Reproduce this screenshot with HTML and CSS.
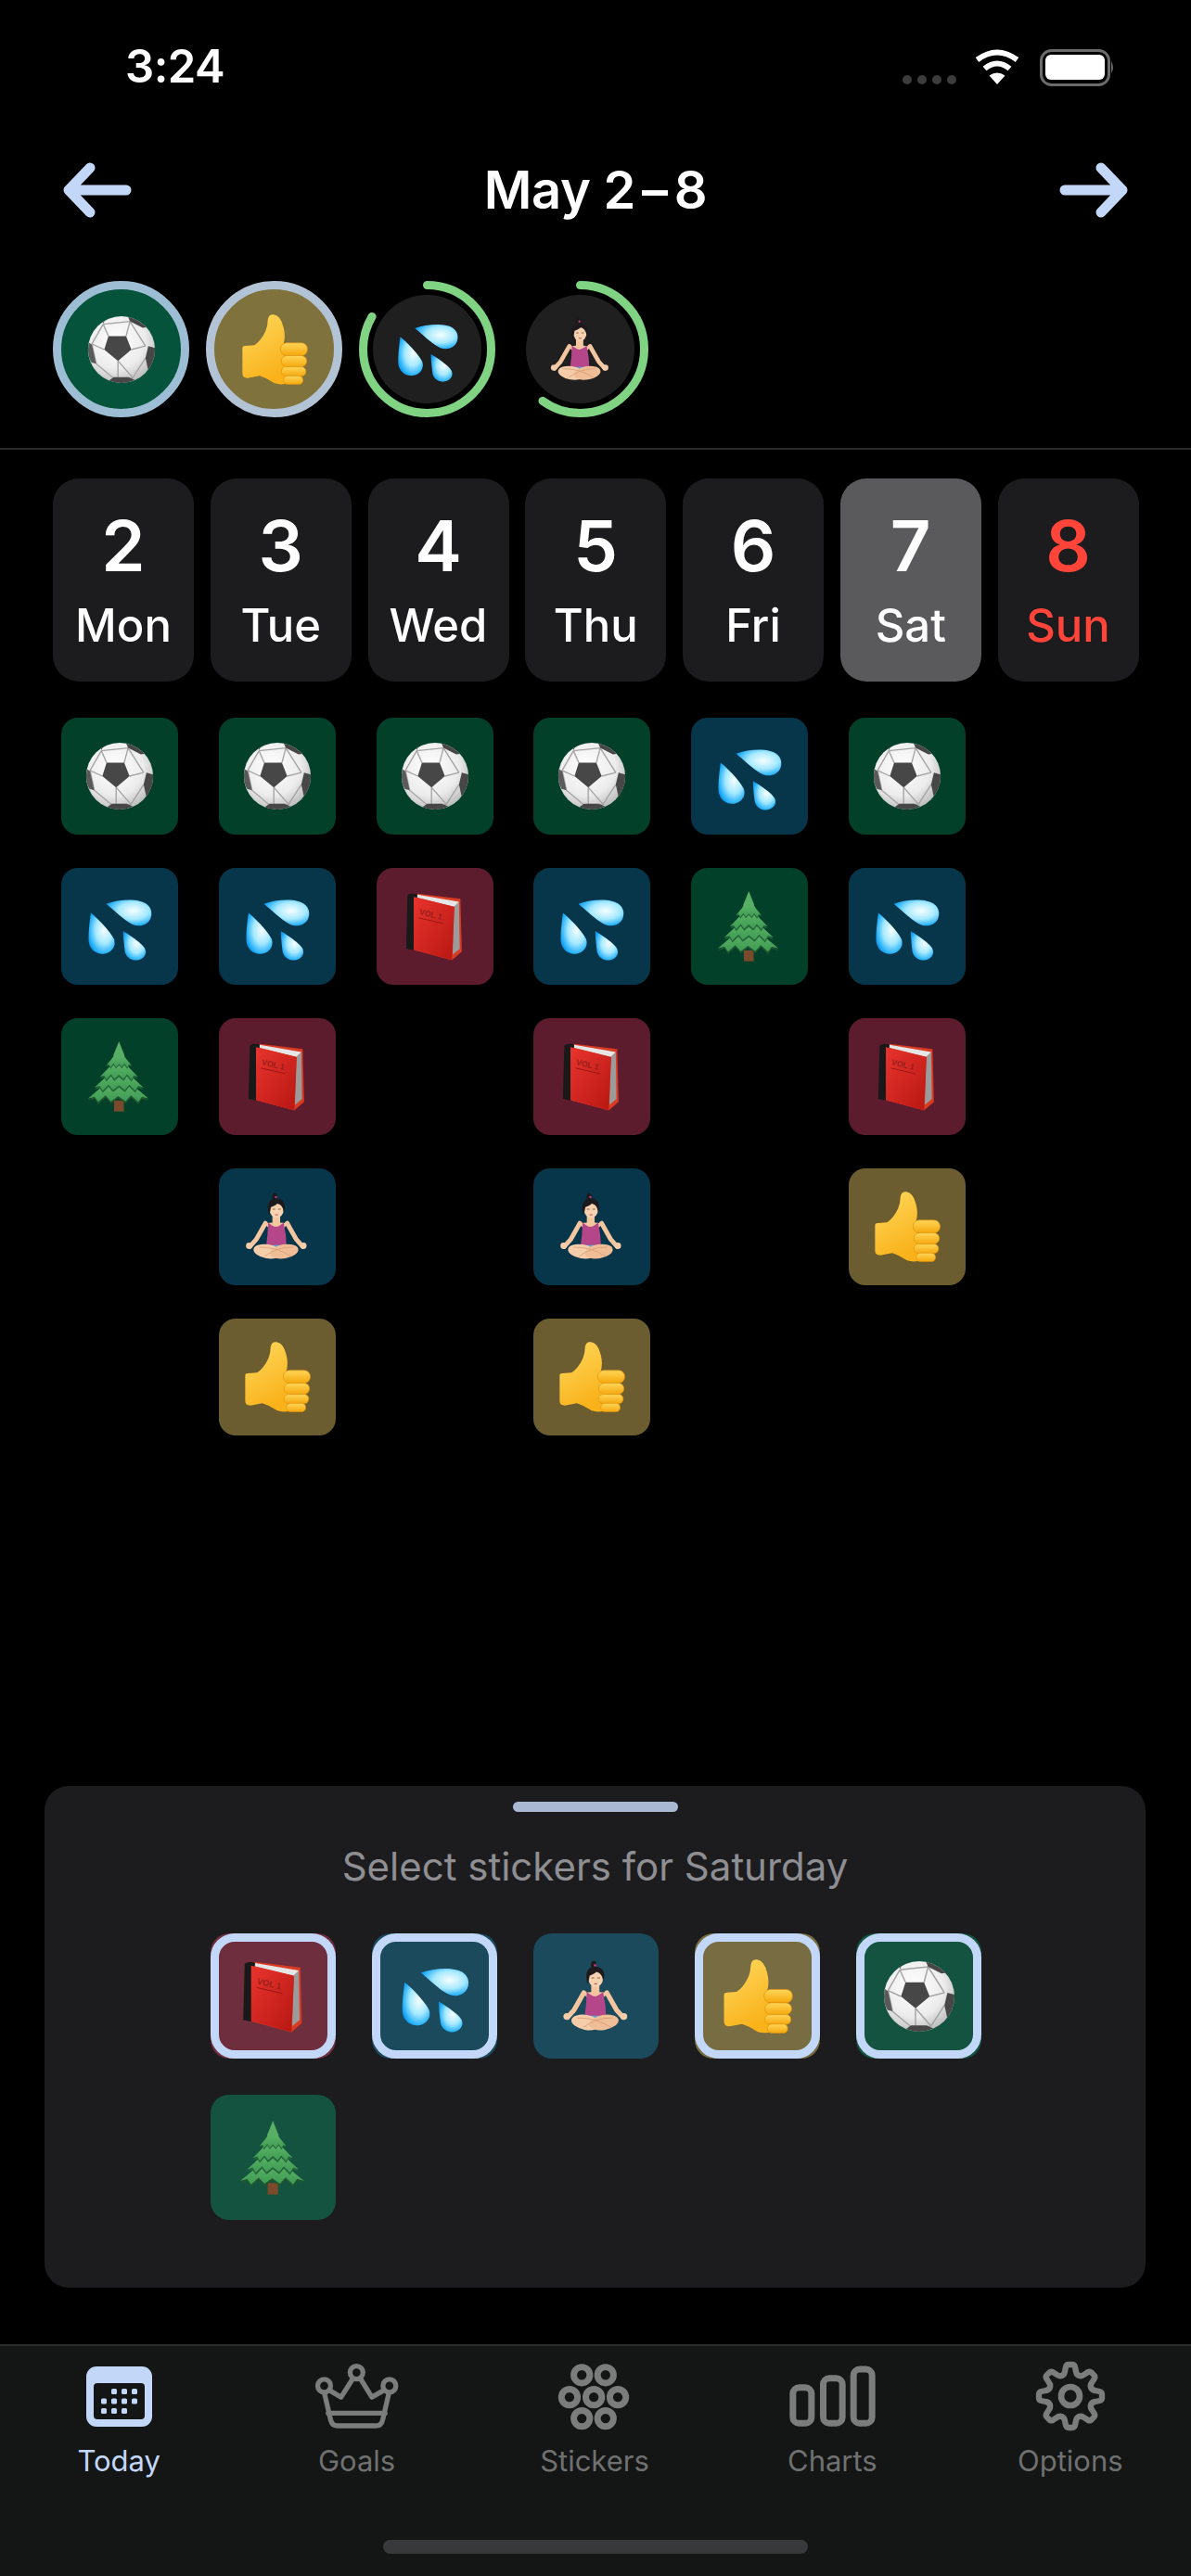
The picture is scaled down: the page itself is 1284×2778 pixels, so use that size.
FILE: index.html
```html
<!DOCTYPE html>
<html lang="en">
<head>
<meta charset="utf-8">
<title>May 2–8</title>
<link rel="stylesheet" href="styles.css">
</head>
<body>
<svg class="defs" aria-hidden="true">
  <defs>
    <radialGradient id="ballG" cx=".42" cy=".36" r=".72"><stop offset="0" stop-color="#fff"/><stop offset=".6" stop-color="#ececec"/><stop offset="1" stop-color="#b0b0b0"/></radialGradient>
    <radialGradient id="dropG" cx=".6" cy=".42" r=".66"><stop offset="0" stop-color="#f6feff"/><stop offset=".5" stop-color="#a6e9ff"/><stop offset=".85" stop-color="#2cb4fa"/><stop offset="1" stop-color="#0a95ec"/></radialGradient>
    <linearGradient id="coverG" x1="0" y1="0" x2="1" y2="1"><stop offset="0" stop-color="#e8342e"/><stop offset="1" stop-color="#b81712"/></linearGradient>
    <linearGradient id="thumbG" x1="0" y1="0" x2=".4" y2="1"><stop offset="0" stop-color="#ffd95f"/><stop offset="1" stop-color="#f9b21a"/></linearGradient>
    <linearGradient id="fingerG" x1="0" y1="0" x2="0" y2="1"><stop offset="0" stop-color="#ffd658"/><stop offset="1" stop-color="#f5a80d"/></linearGradient>
    <linearGradient id="treeG" x1="0" y1="0" x2="0" y2="1"><stop offset="0" stop-color="#6cc46f"/><stop offset="1" stop-color="#3f9a54"/></linearGradient>
    <clipPath id="ballClip"><circle cx="50" cy="50" r="47.5"/></clipPath>
    <path id="skirt" d="M0 0L.55 .55L1 .9L.78 .84L.66 1L.42 .8L.24 .98L0 .82L-.24 .98L-.42 .8L-.66 1L-.78 .84L-1 .9L-.55 .55Z"/>

    <symbol id="ball" viewBox="0 0 100 100">
      <circle cx="50" cy="50" r="47.5" fill="url(#ballG)"/>
      <g clip-path="url(#ballClip)">
        <g stroke="#a4a4a4" stroke-width="1.8" fill="none">
          <path d="M31.5 31L24 14M56.500 31L62 10M64 50L84 45M45 66L45 96M25.500 50L8 42M24 14L62 10M62 10L84 45M84 62L66 90L45 96L14 70L8 42L24 14M45 66L66 90"/>
        </g>
        <path fill="#474747" d="M31.500 31H56.500L64 50L45 66L25.500 50Z"/>
        <path fill="#474747" d="M88 45L99 48V68L88 80L84 62Z"/>
        <path fill="#474747" d="M59 3L74 5L88 18L80 19L62 10Z"/>
        <path fill="#474747" d="M39 89H60L69 93L50 100L32 94Z"/>
        <path fill="#5a5a5a" d="M1 38L8 43L14 70L7 68L1 55Z"/>
        <path fill="#5a5a5a" d="M22 8L35 2L28 6L24 13Z"/>
      </g>
    </symbol>

    <symbol id="drops" viewBox="0 0 100 100">
      <path fill="url(#dropG)" d="M31 18C45 13 65 11 78 14C92 16 98 28 94 38C90 49 76 52 66 46C55 40 42 27 31 18Z"/>
      <path fill="url(#dropG)" d="M9 31C18 38 35 55 42 68C46 80 36 90 24 89C12 88 5 78 6 66C6 54 8 40 9 31Z"/>
      <path fill="url(#dropG)" d="M55 57C65 63 82 74 86 82C90 92 80 99 71 98C62 97 57 90 57 82C56 74 55 65 55 57Z"/>
    </symbol>

    <symbol id="book" viewBox="0 0 100 100">
      <path fill="#d83a22" d="M25 3.500L86 11L88 86L74 98L22 84Z"/>
      <path fill="#9b9b9b" d="M77 22L84 15L85 82L75 90Z"/>
      <path fill="#e6e6e6" d="M20 6L25 5L84 15L77 22L20 8Z"/>
      <path fill="#191919" d="M11 6C14 3 22 3 25 5L20 84L9 81.500Z"/>
      <path fill="url(#coverG)" d="M19.700 8.300L77.600 22.400L74 97.800L19.700 83.400Z"/>
      <text class="vol" x="27" y="33" transform="rotate(13 27 33)">VOL 1</text>
      <path stroke="#981512" stroke-width="1.200" d="M27 38L62 46"/>
    </symbol>

    <symbol id="person" viewBox="0 0 100 100">
      <path fill="none" stroke="#f3c6a0" stroke-width="6.500" stroke-linecap="round" stroke-linejoin="round" d="M33 45L20 68L11 78M64 45L77 68L86 78"/>
      <path fill="#f3c6a0" d="M43 34H54V44L66 45L60 51H37L31 45L43 44Z"/>
      <path fill="#b5468a" d="M37 44L41 47Q48 53 55 47L59 44L62 62L63 78H34L36 62Z"/>
      <path fill="#5aa7d8" d="M40 76H56L52 83H44Z"/>
      <ellipse cx="36" cy="85" rx="20" ry="10" transform="rotate(10 36 85)" fill="#f5cdaa"/>
      <ellipse cx="60" cy="85" rx="20" ry="10" transform="rotate(-10 60 85)" fill="#efbe96"/>
      <path fill="none" stroke="#d49a72" stroke-width="1" d="M24 79Q48 78 70 92M72 79Q50 78 32 92"/>
      <circle cx="10" cy="77" r="4.500" fill="#f5cdaa"/><circle cx="87" cy="77" r="4.500" fill="#f5cdaa"/>
      <ellipse cx="49" cy="25" rx="10" ry="12.500" fill="#f7d2b1"/>
      <path fill="#1c1a1c" d="M38 33C34 18 38 9 49 10C59 10 63 19 59 29C58 22 55 18 50 17C47 20 43 21 41 22C40 26 40 29 38 33Z"/>
      <path fill="#1c1a1c" d="M44 12C41 7 43 2 47 2C51 3 50 8 48 11Z"/>
      <circle cx="48" cy="8" r="1.600" fill="#c2387f"/>
      <path fill="none" stroke="#6e4a38" stroke-width="1" d="M43 25H47M51 25H55"/>
      <path fill="none" stroke="#b5545a" stroke-width="1.400" d="M47 33H51"/>
    </symbol>

    <symbol id="thumb" viewBox="0 0 100 100">
      <g transform="translate(-3 -5) scale(1.06)">
        <path fill="url(#thumbG)" d="M7 50Q7 47 11 47L23 46Q32 40 38 27Q41 20 41 12Q42 4 49 5Q58 6 62 22Q65 34 62 44L70 96Q60 100 50 97Q40 90 30 87L14 90Q7 90 7 84Z"/>
        <rect x="58" y="43" width="36" height="17" rx="8" fill="url(#fingerG)" stroke="#e0920c" stroke-width=".8"/>
        <rect x="59" y="60" width="34" height="15" rx="7.500" fill="url(#fingerG)" stroke="#e0920c" stroke-width=".8"/>
        <rect x="59" y="75" width="33" height="12.500" rx="6" fill="url(#fingerG)" stroke="#e0920c" stroke-width=".8"/>
        <rect x="62" y="87" width="26" height="11.500" rx="5.500" fill="url(#fingerG)" stroke="#e0920c" stroke-width=".8"/>
      </g>
    </symbol>

    <symbol id="tree" viewBox="0 0 100 100">
      <rect x="42" y="84" width="14" height="15.500" fill="#7a4a2a"/>
      <use href="#skirt" transform="translate(48 42) scale(43 47)" fill="#1f5730"/>
      <use href="#skirt" transform="translate(48 39) scale(43 47)" fill="url(#treeG)"/>
      <use href="#skirt" transform="translate(49 31) scale(35 42)" fill="#25663a"/>
      <use href="#skirt" transform="translate(49 28) scale(35 42)" fill="url(#treeG)"/>
      <use href="#skirt" transform="translate(49 21) scale(27 36)" fill="#25663a"/>
      <use href="#skirt" transform="translate(49 18) scale(27 36)" fill="url(#treeG)"/>
      <use href="#skirt" transform="translate(49 11) scale(18 28)" fill="#25663a"/>
      <use href="#skirt" transform="translate(49 9) scale(18 28)" fill="url(#treeG)"/>
      <path fill="#58ae64" d="M49 0L57 20Q49 24 41 20Z"/>
    </symbol>
  </defs>
</svg>

<div class="phone">
  <header class="status">
    <span class="time">3:24</span>
    <svg class="status-icons" viewBox="0 0 234 44" width="234" height="44">
      <g class="signal"><circle cx="8" cy="36" r="5"/><circle cx="24" cy="36" r="5"/><circle cx="40" cy="36" r="5"/><circle cx="56" cy="36" r="5"/></g>
      <g class="wifi">
        <path d="M83.500 14.500Q105 -1.500 126.500 14.500"/>
        <path d="M91.500 24Q105 13 118.500 24"/>
        <path class="wifi-tip" d="M96.500 31.500Q105 25.500 113.500 31.500L105 41Z"/>
      </g>
      <rect class="batt" x="152.500" y="4.500" width="73" height="37" rx="11"/>
      <rect class="batt-fill" x="157" y="9" width="64" height="27" rx="6"/>
      <path class="batt-nub" d="M228 16Q232 23 228 29Z"/>
    </svg>
  </header>

  <nav class="weekbar">
    <svg class="arrow" viewBox="0 0 80 70" width="80" height="70"><path d="M72 35H10M33 11L10 35L33 59"/></svg>
    <h1 class="title">May 2<span class="dash">–</span>8</h1>
    <svg class="arrow" viewBox="0 0 80 70" width="80" height="70"><path d="M8 35H70M47 11L70 35L47 59"/></svg>
  </nav>

  <section class="habits">
    <div class="habit done soccer"><svg class="emoji"><use href="#ball"/></svg></div>
    <div class="habit done like"><svg class="emoji"><use href="#thumb"/></svg></div>
    <div class="habit">
      <svg class="ring" viewBox="0 0 147 147"><circle pathLength="100" stroke-dasharray="83.500 100" cx="73.500" cy="73.500" r="69" transform="rotate(-90 73.500 73.500)"/></svg>
      <div class="core"><svg class="emoji small"><use href="#drops"/></svg></div>
    </div>
    <div class="habit">
      <svg class="ring" viewBox="0 0 147 147"><circle pathLength="100" stroke-dasharray="60 100" cx="73.500" cy="73.500" r="69" transform="rotate(-90 73.500 73.500)"/></svg>
      <div class="core"><svg class="emoji small"><use href="#person"/></svg></div>
    </div>
  </section>

  <hr class="rule">

  <section class="week days">
    <div class="day"><span class="num">2</span><span class="dow">Mon</span></div>
    <div class="day"><span class="num">3</span><span class="dow">Tue</span></div>
    <div class="day"><span class="num">4</span><span class="dow">Wed</span></div>
    <div class="day"><span class="num">5</span><span class="dow">Thu</span></div>
    <div class="day"><span class="num">6</span><span class="dow">Fri</span></div>
    <div class="day today"><span class="num">7</span><span class="dow">Sat</span></div>
    <div class="day sunday"><span class="num">8</span><span class="dow">Sun</span></div>
  </section>

  <section class="week log">
    <div class="col">
      <div class="sticker green"><svg class="emoji"><use href="#ball"/></svg></div>
      <div class="sticker blue"><svg class="emoji"><use href="#drops"/></svg></div>
      <div class="sticker green"><svg class="emoji"><use href="#tree"/></svg></div>
    </div>
    <div class="col">
      <div class="sticker green"><svg class="emoji"><use href="#ball"/></svg></div>
      <div class="sticker blue"><svg class="emoji"><use href="#drops"/></svg></div>
      <div class="sticker red"><svg class="emoji"><use href="#book"/></svg></div>
      <div class="sticker blue"><svg class="emoji"><use href="#person"/></svg></div>
      <div class="sticker tan"><svg class="emoji"><use href="#thumb"/></svg></div>
    </div>
    <div class="col">
      <div class="sticker green"><svg class="emoji"><use href="#ball"/></svg></div>
      <div class="sticker red"><svg class="emoji"><use href="#book"/></svg></div>
    </div>
    <div class="col">
      <div class="sticker green"><svg class="emoji"><use href="#ball"/></svg></div>
      <div class="sticker blue"><svg class="emoji"><use href="#drops"/></svg></div>
      <div class="sticker red"><svg class="emoji"><use href="#book"/></svg></div>
      <div class="sticker blue"><svg class="emoji"><use href="#person"/></svg></div>
      <div class="sticker tan"><svg class="emoji"><use href="#thumb"/></svg></div>
    </div>
    <div class="col">
      <div class="sticker blue"><svg class="emoji"><use href="#drops"/></svg></div>
      <div class="sticker green"><svg class="emoji"><use href="#tree"/></svg></div>
    </div>
    <div class="col">
      <div class="sticker green"><svg class="emoji"><use href="#ball"/></svg></div>
      <div class="sticker blue"><svg class="emoji"><use href="#drops"/></svg></div>
      <div class="sticker red"><svg class="emoji"><use href="#book"/></svg></div>
      <div class="sticker tan"><svg class="emoji"><use href="#thumb"/></svg></div>
    </div>
    <div class="col"></div>
  </section>

  <section class="sheet">
    <div class="handle"></div>
    <h2 class="sheet-title">Select stickers for Saturday</h2>
    <div class="picker">
      <div class="pick red selected"><svg class="emoji large"><use href="#book"/></svg></div>
      <div class="pick blue selected"><svg class="emoji large"><use href="#drops"/></svg></div>
      <div class="pick blue"><svg class="emoji large"><use href="#person"/></svg></div>
      <div class="pick tan selected"><svg class="emoji large"><use href="#thumb"/></svg></div>
      <div class="pick green selected"><svg class="emoji large"><use href="#ball"/></svg></div>
      <div class="pick green"><svg class="emoji large"><use href="#tree"/></svg></div>
    </div>
  </section>

  <footer class="tabbar">
    <div class="tabs">
      <div class="tab active">
        <div class="tab-icon">
          <svg viewBox="0 0 71 65" width="71" height="65">
            <rect class="cal" width="71" height="65" rx="11"/>
            <rect class="cal-face" x="8" y="18" width="55" height="39" rx="4"/>
            <g class="cal-dots">
              <rect x="27" y="24" width="6" height="6" rx="1.500"/><rect x="38" y="24" width="6" height="6" rx="1.500"/><rect x="49" y="24" width="6" height="6" rx="1.500"/>
              <rect x="16" y="34.500" width="6" height="6" rx="1.500"/><rect x="27" y="34.500" width="6" height="6" rx="1.500"/><rect x="38" y="34.500" width="6" height="6" rx="1.500"/><rect x="49" y="34.500" width="6" height="6" rx="1.500"/>
              <rect x="16" y="45" width="6" height="6" rx="1.500"/><rect x="27" y="45" width="6" height="6" rx="1.500"/><rect x="38" y="45" width="6" height="6" rx="1.500"/>
            </g>
          </svg>
        </div>
        <span class="tab-label">Today</span>
      </div>
      <div class="tab">
        <div class="tab-icon">
          <svg class="line" viewBox="830 50 285 220" width="95" height="73">
            <circle cx="972" cy="82" r="21"/><circle cx="867" cy="125" r="21"/><circle cx="1079" cy="125" r="21"/>
            <path d="M885 140L922 162L960 102M985 102L1022 162L1060 140M868 150L888 236Q892 255 910 255H1035Q1053 255 1057 236L1077 150M880 214H1065"/>
          </svg>
        </div>
        <span class="tab-label">Goals</span>
      </div>
      <div class="tab">
        <div class="tab-icon">
          <svg class="line thick" viewBox="60 50 250 230" width="83" height="77">
            <circle cx="145" cy="95" r="26"/><circle cx="222" cy="95" r="26"/>
            <circle cx="105" cy="167" r="26"/><circle cx="184" cy="167" r="26"/><circle cx="262" cy="167" r="26"/>
            <circle cx="145" cy="236" r="26"/><circle cx="222" cy="236" r="26"/>
          </svg>
        </div>
        <span class="tab-label">Stickers</span>
      </div>
      <div class="tab">
        <div class="tab-icon">
          <svg class="line thick" viewBox="805 60 290 210" width="97" height="70">
            <rect x="822" y="137" width="60" height="116" rx="20"/>
            <rect x="920" y="107" width="62" height="146" rx="20"/>
            <rect x="1018" y="78" width="60" height="175" rx="20"/>
          </svg>
        </div>
        <span class="tab-label">Charts</span>
      </div>
      <div class="tab">
        <div class="tab-icon">
          <svg class="line gear" viewBox="-120 -120 240 240" width="80" height="80">
            <defs><path id="tooth" d="M-27.600 -66.500Q-19 -70 -18 -80L-15 -94Q-13 -102 -6 -102H6Q13 -102 15 -94L18 -80Q19 -70 27.600 -66.500"/></defs>
            <use href="#tooth"/><use href="#tooth" transform="rotate(45)"/><use href="#tooth" transform="rotate(90)"/><use href="#tooth" transform="rotate(135)"/><use href="#tooth" transform="rotate(180)"/><use href="#tooth" transform="rotate(225)"/><use href="#tooth" transform="rotate(270)"/><use href="#tooth" transform="rotate(315)"/>
            <circle r="30"/>
          </svg>
        </div>
        <span class="tab-label">Options</span>
      </div>
    </div>
    <div class="home"></div>
  </footer>
</div>
</body>
</html>
```
FILE: styles.css
```css
* { box-sizing: border-box; }
html, body { margin: 0; padding: 0; background: #000; }
body { font-family: "Inter", "Liberation Sans", sans-serif; color: #fff; }

.defs { position: absolute; width: 0; height: 0; }
.vol { font: 600 11.500px "Liberation Sans", sans-serif; fill: #98201a; }

.phone { width: 1284px; height: 2778px; display: flex; flex-direction: column; overflow: hidden; background: #000; }

/* status bar */
.status { height: 144px; flex: none; display: flex; align-items: center; justify-content: space-between; padding: 0 80px 0 135px; }
.time { font-size: 49px; font-weight: 600; line-height: 56px; letter-spacing: -0.5px; }
.status-icons { display: block; }
.signal { fill: #3c3c3c; }
.wifi path { fill: none; stroke: #fff; stroke-width: 6px; }
.wifi .wifi-tip { fill: #fff; stroke: none; }
.batt { fill: none; stroke: #6b6b6b; stroke-width: 3px; }
.batt-fill { fill: #fff; }
.batt-nub { fill: #6b6b6b; }

/* week switcher */
.weekbar { height: 122px; flex: none; display: flex; align-items: center; justify-content: space-between; padding: 0 64px; }
.title { margin: 0; font-size: 56px; font-weight: 600; line-height: 70px; letter-spacing: -0.3px; }
.dash { margin: 0 7px; }
.arrow path { fill: none; stroke: #c3d8f8; stroke-width: 11px; stroke-linecap: round; stroke-linejoin: round; }

/* habit rings */
.habits { flex: none; display: flex; gap: 18px; margin-top: 37px; padding-left: 57px; }
.habit { position: relative; width: 147px; height: 147px; display: flex; align-items: center; justify-content: center; border-radius: 50%; }
.done { border: 9px solid; }
.soccer { background: #04533a; border-color: #9dbdd4; }
.like { background: #80723c; border-color: #b3c3d6; }
.core { width: 117px; height: 117px; border-radius: 50%; background: #1f1f1f; display: flex; align-items: center; justify-content: center; }
.ring { position: absolute; inset: 0; width: 147px; height: 147px; }
.ring circle { fill: none; stroke: #7fd382; stroke-width: 9px; stroke-linecap: round; }

.emoji { display: block; width: 76px; height: 76px; flex: none; }
.emoji.small { width: 72px; height: 72px; }
.emoji.large { width: 80px; height: 80px; }

.rule { flex: none; height: 2px; margin: 33px 0 0; border: 0; background: #2b2b2b; }

/* week grid */
.week { flex: none; display: grid; grid-template-columns: repeat(7, 152px); column-gap: 17.75px; padding-left: 57px; }
.days { margin-top: 31px; }
.day { height: 219px; border-radius: 28px; background: #1c1c1e; display: flex; flex-direction: column; align-items: center; }
.num { margin-top: 30px; font-size: 76px; font-weight: 600; line-height: 84px; }
.dow { margin-top: 15px; font-size: 49px; font-weight: 550; line-height: 60px; }
.today { background: #5a5a5c; }
.sunday { color: #ff453a; }

.log { margin-top: 39px; }
.col { display: flex; flex-direction: column; gap: 36px; padding-left: 9px; }
.sticker { width: 126px; height: 126px; border-radius: 18px; display: flex; align-items: center; justify-content: center; }
.sticker.green { background: #03402a; }
.sticker.blue { background: #07364a; }
.sticker.red { background: #5c1c2e; }
.sticker.tan { background: #6b5d2f; }

/* bottom sheet */
.sheet { flex: none; width: 1187px; height: 541px; margin: auto 0 61px 48px; border-radius: 26px; background: #1c1c1e; display: flex; flex-direction: column; align-items: center; padding-top: 17px; }
.handle { width: 178px; height: 11px; border-radius: 6px; background: #a9b9d3; flex: none; }
.sheet-title { margin: 29px 0 0; font-size: 42px; font-weight: 400; line-height: 60px; color: #8e8e93; }
.picker { width: 100%; margin-top: 42px; padding-left: 179px; display: grid; grid-template-columns: repeat(5, 135px); gap: 39px; }
.pick { position: relative; width: 135px; height: 135px; border-radius: 20px; display: flex; align-items: center; justify-content: center; }
.pick.red { background: #6f2e3e; }
.pick.blue { background: #1b4a5c; }
.pick.tan { background: #786c42; }
.pick.green { background: #14533f; }
.selected::after { content: ""; position: absolute; inset: 0; border: 9px solid #c3d8f8; border-radius: 26px; }

/* tab bar */
.tabbar { flex: none; height: 250px; background: #141515; border-top: 2px solid #2a2b2b; padding-top: 16px; display: flex; flex-direction: column; }
.tabs { display: grid; grid-template-columns: repeat(5, 256.4px); }
.tab { display: flex; flex-direction: column; align-items: center; color: #6f7170; }
.tab.active { color: #c3d8f8; }
.tab-icon { height: 76px; display: flex; align-items: center; justify-content: center; }
.tab-icon svg { display: block; }
.tab-label { margin-top: 12px; font-size: 31px; font-weight: 400; line-height: 40px; }
.cal { fill: #c3d8f8; }
.cal-face { fill: #141515; }
.cal-dots { fill: #c3d8f8; }
.line circle, .line rect, .line path, .line use { fill: none; stroke: #7b7d7c; stroke-width: 16px; stroke-linecap: round; stroke-linejoin: round; }
.line.thick circle, .line.thick rect { stroke-width: 21px; }
.gear circle { stroke-width: 20px; }
.gear use, .gear path { stroke-width: 19px; }
.home { width: 458px; height: 15px; border-radius: 8px; background: #37393a; margin: 65px auto 0; }
```
